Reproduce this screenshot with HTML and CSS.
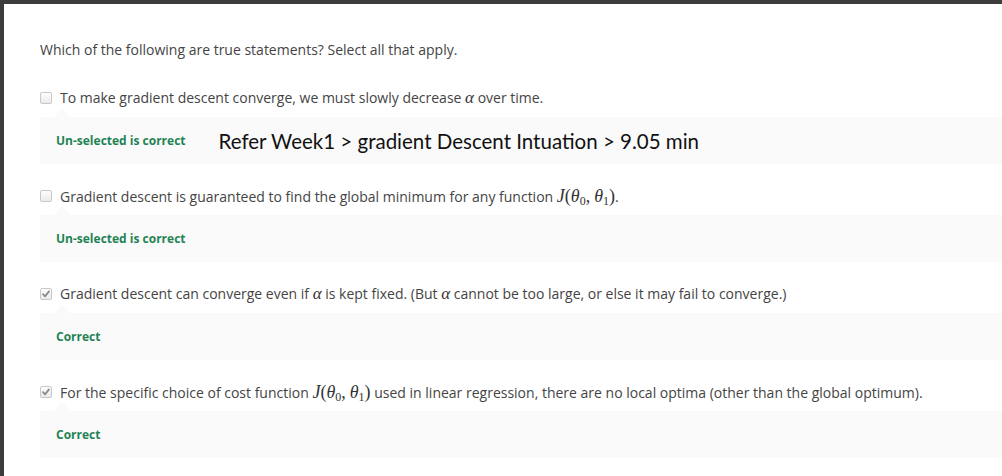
FILE: index.html
```html
<!DOCTYPE html>
<html>
<head>
<meta charset="utf-8">
<link rel="stylesheet" href="styles.css">
</head>
<body>
<main class="panel">
  <p class="question">Which of the following are true statements? Select all that apply.</p>

  <div class="option">
    <div class="row">
      <span class="box"></span>
      <span class="label">To make gradient descent converge, we must slowly decrease <i class="m">α</i> over time.</span>
    </div>
    <div class="feedback">
      <span class="verdict">Un-selected is correct</span>
      <span class="note">Refer Week1 &gt; gradient Descent Intuation &gt; 9.05 min</span>
    </div>
  </div>

  <div class="option">
    <div class="row">
      <span class="box"></span>
      <span class="label">Gradient descent is guaranteed to find the global minimum for any function <span class="math"><i>J</i>(<i>θ</i><sub>0</sub>,<i class="sp">θ</i><sub>1</sub>)</span>.</span>
    </div>
    <div class="feedback">
      <span class="verdict">Un-selected is correct</span>
    </div>
  </div>

  <div class="option">
    <div class="row">
      <span class="box checked"><svg viewBox="0 0 12 12" width="12" height="12"><path d="M3 6.2 L5 8.4 L9 3.4" fill="none" stroke="#8c8c8c" stroke-width="1.8" stroke-linecap="round" stroke-linejoin="round"/></svg></span>
      <span class="label">Gradient descent can converge even if <i class="m">α</i> is kept fixed. (But <i class="m">α</i> cannot be too large, or else it may fail to converge.)</span>
    </div>
    <div class="feedback">
      <span class="verdict">Correct</span>
    </div>
  </div>

  <div class="option">
    <div class="row">
      <span class="box checked"><svg viewBox="0 0 12 12" width="12" height="12"><path d="M3 6.2 L5 8.4 L9 3.4" fill="none" stroke="#8c8c8c" stroke-width="1.8" stroke-linecap="round" stroke-linejoin="round"/></svg></span>
      <span class="label">For the specific choice of cost function <span class="math"><i>J</i>(<i>θ</i><sub>0</sub>,<i class="sp">θ</i><sub>1</sub>)</span> used in linear regression, there are no local optima (other than the global optimum).</span>
    </div>
    <div class="feedback">
      <span class="verdict">Correct</span>
    </div>
  </div>
</main>
</body>
</html>
```

FILE: styles.css
```css
html, body {
  margin: 0;
  padding: 0;
}
body {
  background: #3c3c3c;
  padding: 4px 0 0 4px;
  height: 476px;
  box-sizing: border-box;
  overflow: hidden;
}
.panel {
  background: #ffffff;
  height: 100%;
  box-sizing: border-box;
  padding: 36px 0 0 36px;
  font-family: "Open Sans", "DejaVu Sans", sans-serif;
  font-size: 14px;
  color: #444444;
}
.question {
  margin: 0;
  line-height: 20px;
}
.option {
  margin-top: 28px;
}
.option + .option {
  margin-top: 22px;
}
.row {
  display: flex;
  align-items: center;
  gap: 8px;
  height: 20px;
  white-space: nowrap;
}
.box {
  flex: none;
  width: 12px;
  height: 12px;
  box-sizing: border-box;
  border: 1px solid #c8c8c8;
  border-radius: 2px;
  background: linear-gradient(#fdfdfd, #ebebeb);
  position: relative;
}
.box svg {
  position: absolute;
  left: -1px;
  top: -1px;
}
.label {
  line-height: 20px;
}
.m, .math {
  font-family: "Liberation Serif", "DejaVu Serif", serif;
  font-size: 17px;
  color: #333333;
}
.math {
  font-size: 18px;
}
.m {
  font-style: italic;
}
.math .sp {
  margin-left: 4px;
}
.math sub {
  font-size: 12px;
  vertical-align: -3px;
  line-height: 0;
}
.feedback {
  position: relative;
  margin-top: 9px;
  height: 47px;
  background: #fafafa;
  display: flex;
  align-items: center;
  padding-left: 16px;
}
.feedback::before {
  content: "";
  position: absolute;
  left: 14px;
  top: -9px;
  border-left: 8px solid transparent;
  border-right: 8px solid transparent;
  border-bottom: 9px solid #fafafa;
}
.verdict {
  font-size: 12px;
  font-weight: 700;
  color: #1f8354;
}
.note {
  margin-left: 33px;
  font-family: "Lato", "Open Sans", sans-serif;
  font-size: 20.5px;
  color: #111111;
}
```
